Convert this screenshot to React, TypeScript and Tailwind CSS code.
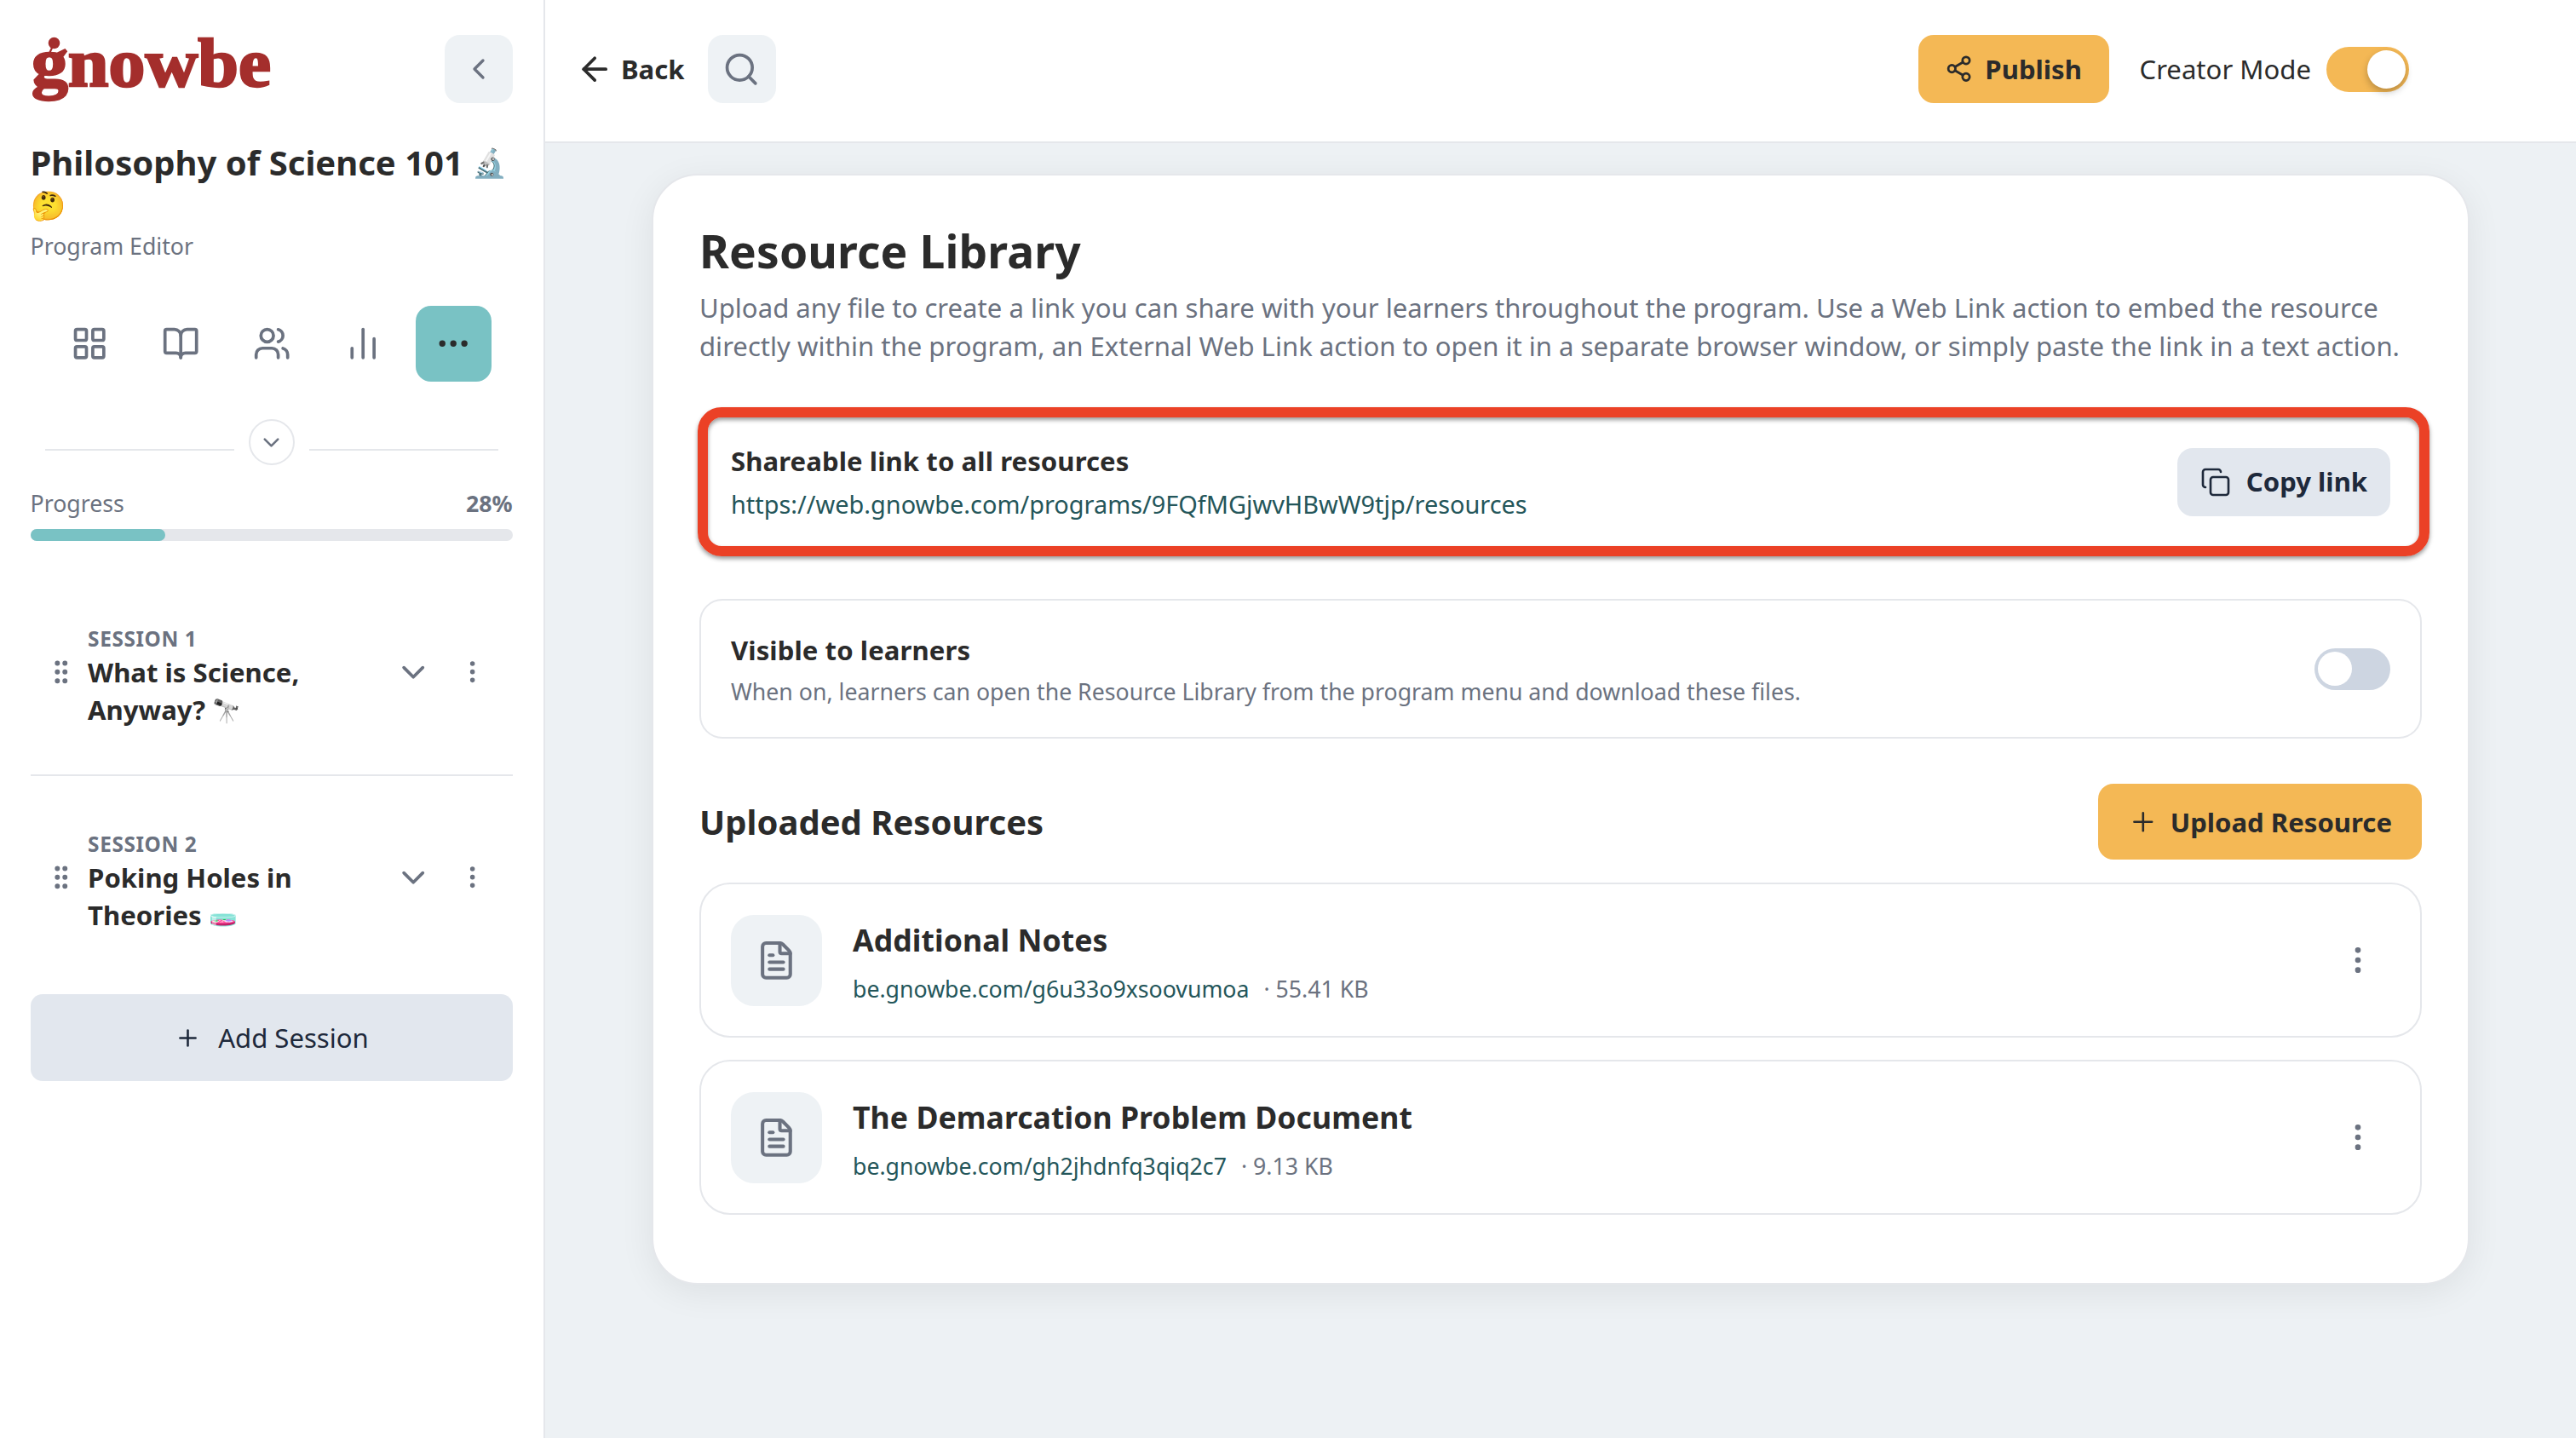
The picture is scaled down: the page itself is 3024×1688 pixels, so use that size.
import {
  ArrowLeft,
  BookOpen,
  ChartNoAxesColumn,
  ChevronDown,
  ChevronLeft,
  Copy,
  Ellipsis,
  EllipsisVertical,
  FileText,
  GripVertical,
  LayoutGrid,
  Plus,
  Search,
  Share2,
  Users,
} from "lucide-react";
import React from "react";

const sessions = [
  { label: "SESSION 1", first: "What is Science,", second: "Anyway?", emoji: "🔭", tint: "grayscale -translate-y-px" },
  { label: "SESSION 2", first: "Poking Holes in", second: "Theories", emoji: "🧫", tint: "hue-rotate-[-30deg] -translate-y-1" },
];

const resources = [
  { title: "Additional Notes", link: "be.gnowbe.com/g6u33o9xsoovumoa", size: "55.41 KB" },
  { title: "The Demarcation Problem Document", link: "be.gnowbe.com/gh2jhdnfq3qiq2c7", size: "9.13 KB" },
];

const tabs = [LayoutGrid, BookOpen, Users, ChartNoAxesColumn];

function Logo() {
  return (
    <svg width="286" height="84" viewBox="0 0 286 84" className="overflow-visible">
      <text
        x="1"
        y="60"
        textLength="281"
        lengthAdjust="spacingAndGlyphs"
        fontSize="80"
        fontWeight="700"
        fill="#a42e2c"
        stroke="#a42e2c"
        strokeWidth="2.5"
        fontFamily="'Liberation Serif', serif"
      >
        gnowbe
      </text>
      <circle cx="27.500" cy="9.500" r="6.800" fill="#a42e2c" />
      <path d="M25.500 14L20 26" stroke="#a42e2c" strokeWidth="2.200" />
    </svg>
  );
}

function SessionRow({ session }: { session: (typeof sessions)[number] }) {
  return (
    <div className="flex items-center h-[160px] pl-[18px]">
      <GripVertical size={35.6} color="#6b7280" className="shrink-0" />
      <div className="ml-[14px] w-[348px] pt-[9px]">
        <p className="text-[24.4px] leading-[35px] font-bold text-[#6b7280] tracking-[0.6px]">{session.label}</p>
        <p className="text-[31.1px] leading-[44px] font-bold whitespace-nowrap">
          {session.first}
          <br />
          {session.second} <span className={`inline-block text-[27px] leading-none ${session.tint}`}>{session.emoji}</span>
        </p>
      </div>
      <ChevronDown size={44.4} color="#6b7280" className="shrink-0 ml-[12px]" />
      <EllipsisVertical size={33.3} color="#6b7280" className="shrink-0 ml-[31px]" />
    </div>
  );
}

function Sidebar() {
  return (
    <aside className="w-[640px] shrink-0 bg-white border-r-2 border-[#e5e7eb] pl-[35.5px] pr-[36.5px]">
      <div className="flex justify-between pt-[41px] h-[121px]">
        <Logo />
        <button className="flex justify-center items-center w-[80px] h-[80px] rounded-[18px] bg-[#eef2f5]">
          <ChevronLeft size={40} color="#6b7280" />
        </button>
      </div>
      <h1 className="mt-[45px] text-[40px] leading-[50px] font-bold whitespace-nowrap">
        Philosophy of Science 101 <span className="inline-block text-[33px] leading-none -translate-y-[3px]">🔬</span>
        <br />
        <span className="inline-block text-[33px] leading-none -translate-y-[3px]">🤔</span>
      </h1>
      <p className="mt-[4px] text-[26.7px] leading-[38px] text-[#6b7280]">Program Editor</p>

      <div className="flex justify-center gap-[18px] mt-[51px]">
        {tabs.map((Icon, i) => (
          <button key={i} className="flex justify-center items-center w-[89px] h-[89px] pl-px">
            <Icon size={44.4} color="#6b7280" />
          </button>
        ))}
        <button className="flex justify-center items-center w-[89px] h-[89px] rounded-[18px] bg-[#79c2c4]">
          <Ellipsis size={44.4} color="#2b2b2b" />
        </button>
      </div>

      <div className="flex mt-[44px] mx-[17px] h-[54px]">
        <div className="flex-1 mt-[35px] h-[2px] bg-[#e5e7eb]" />
        <div className="flex justify-center items-center w-[54px] h-[54px] mx-[17px] rounded-full border-2 border-[#e5e7eb]">
          <ChevronDown size={31} color="#6b7280" />
        </div>
        <div className="flex-1 mt-[35px] h-[2px] bg-[#e5e7eb]" />
      </div>

      <div className="flex justify-between mt-[26px] text-[26.7px] leading-[38px] text-[#6b7280]">
        <span>Progress</span>
        <span className="font-bold">28%</span>
      </div>
      <div className="mt-[11px] h-[14px] rounded-full bg-[#e5e7eb]">
        <div className="w-[28%] h-full rounded-full bg-[#79c2c4]" />
      </div>

      <div className="mt-[74px]">
        <SessionRow session={sessions[0]} />
        <div className="mt-[40px] mb-[39px] h-[2px] bg-[#e5e7eb]" />
        <SessionRow session={sessions[1]} />
      </div>
      <button className="flex justify-center items-center gap-[20px] w-full h-[102px] mt-[57px] pl-px rounded-[14px] bg-[#e2e7ee] text-[31.1px] text-[#1e293b]">
        <Plus size={31} strokeWidth={2} />
        Add Session
      </button>
    </aside>
  );
}

function Header() {
  return (
    <header className="flex items-center h-[168px] pb-[4px] bg-white border-b-2 border-[#e5e7eb] pl-[35.5px] pr-[196px]">
      <ArrowLeft size={44.4} />
      <span className="ml-[9px] text-[31.1px] font-bold">Back</span>
      <button className="flex justify-center items-center w-[80px] h-[80px] ml-[27px] rounded-[18px] bg-[#eef2f5]">
        <Search size={44.4} color="#6b7280" />
      </button>
      <button className="flex justify-center items-center gap-[14px] w-[224px] h-[80px] ml-auto rounded-[18px] bg-[#f4b855] text-[31.1px] font-bold">
        <Share2 size={33.3} />
        Publish
      </button>
      <span className="ml-[36px] text-[31.1px]">Creator Mode</span>
      <div className="flex justify-end items-center w-[97px] h-[53px] ml-[18px] pr-[4px] rounded-full bg-[#f4b855]">
        <div className="w-[45px] h-[45px] rounded-full bg-white shadow-[0_4px_9px_rgba(0,0,0,0.25)]" />
      </div>
    </header>
  );
}

function ResourceCard({ resource }: { resource: (typeof resources)[number] }) {
  return (
    <div className="flex items-center h-[182px] rounded-[36px] border-2 border-[#e5e7eb] pl-[35px] pr-[53px]">
      <div className="flex justify-center items-center w-[107px] h-[107px] rounded-[27px] bg-[#eef2f5]">
        <FileText size={48.9} color="#6b7280" />
      </div>
      <div className="ml-[36px] flex-1 pt-[4px]">
        <h3 className="text-[35.6px] leading-[50px] font-bold tracking-[0.06px]">{resource.title}</h3>
        <p className="mt-[13px] text-[26.7px] leading-[40px] text-[#6b7280]">
          <span className="text-[#24565a] mr-[17px]">{resource.link}</span>· {resource.size}
        </p>
      </div>
      <EllipsisVertical size={40} color="#6b7280" />
    </div>
  );
}

export default function App() {
  return (
    <div className="flex w-[3024px] h-[1688px] overflow-hidden bg-[#edf1f4] font-['Noto_Sans',sans-serif] text-[#2b2b2b]">
      <Sidebar />
      <div className="flex-1">
        <Header />
        <main className="ml-[125px] mt-[36px] w-[2134px] h-[1304px] px-[54px] pt-[53px] rounded-[54px] bg-white border-2 border-[#e5e7eb] shadow-[0_9px_40px_rgba(0,0,0,0.07)]">
          <h2 className="text-[53.3px] leading-[72px] font-bold tracking-[0.12px]">Resource Library</h2>
          <p className="mt-[8px] text-[31.1px] leading-[45px] text-[#6b7280] whitespace-nowrap">
            Upload any file to create a link you can share with your learners throughout the program. Use a Web Link action to embed the resource
            <br />
            directly within the program, an External Web Link action to open it in a separate browser window, or simply paste the link in a text action.
          </p>

          {/* highlighted share link */}
          <div className="flex justify-between items-center h-[175px] mt-[49px] -ml-[2px] -mr-[9px] pl-[27px] pr-[34px] rounded-[28px] border-[12px] border-[#eb4126] shadow-[0_3px_5px_rgba(0,0,0,0.4),inset_0_3px_5px_rgba(0,0,0,0.4)]">
            <div>
              <h3 className="text-[31.1px] leading-[44px] font-bold tracking-[0.08px]">Shareable link to all resources</h3>
              <p className="mt-[8px] text-[28.9px] leading-[42px] text-[#24565a]">
                https://web.gnowbe.com/programs/9FQfMGjwvHBwW9tjp/resources
              </p>
            </div>
            <button className="flex justify-center items-center gap-[18px] w-[250px] h-[80px] rounded-[18px] bg-[#e2e7ee] text-[31.1px] font-bold text-[#1e293b]">
              <Copy size={36} strokeWidth={1.75} />
              Copy link
            </button>
          </div>

          <div className="flex justify-between items-center h-[164px] mt-[50px] px-[35px] rounded-[27px] border-2 border-[#e5e7eb]">
            <div className="pt-[2px]">
              <h3 className="text-[31.1px] leading-[44px] font-bold tracking-[0.08px]">Visible to learners</h3>
              <p className="mt-[7px] text-[26.7px] leading-[40px] text-[#6b7280]">
                When on, learners can open the Resource Library from the program menu and download these files.
              </p>
            </div>
            <div className="flex items-center w-[89px] h-[49px] pl-[4px] rounded-full bg-[#cdd5e1]">
              <div className="w-[40px] h-[40px] rounded-full bg-white" />
            </div>
          </div>

          <div className="flex justify-between items-center mt-[53px]">
            <h2 className="text-[40px] leading-[54px] font-bold">Uploaded Resources</h2>
            <button className="flex justify-center items-center gap-[14px] w-[380px] h-[89px] pt-px rounded-[18px] bg-[#f4b855] text-[31.1px] font-bold">
              <Plus size={35.6} strokeWidth={1.75} />
              Upload Resource
            </button>
          </div>

          <div className="flex flex-col gap-[26px] mt-[27px]">
            {resources.map((resource) => (
              <ResourceCard key={resource.title} resource={resource} />
            ))}
          </div>
        </main>
      </div>
    </div>
  );
}
